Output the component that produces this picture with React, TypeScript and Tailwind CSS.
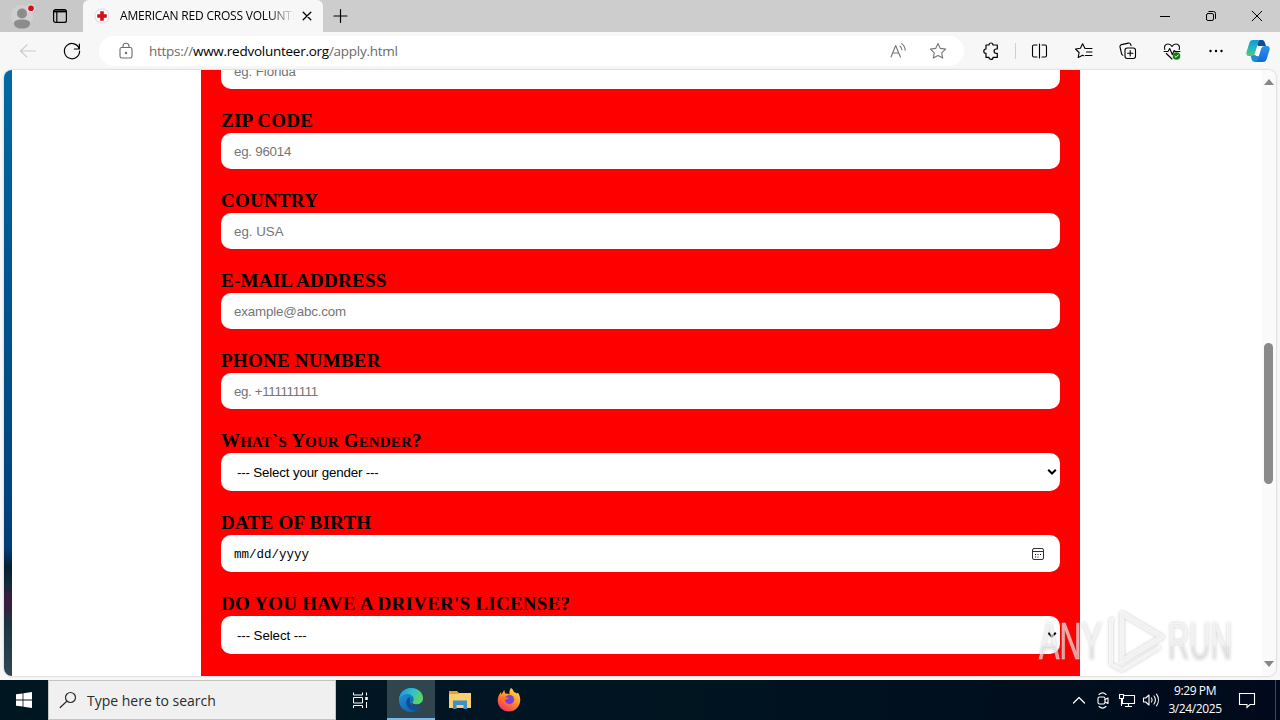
import type { ReactNode } from "react"
import clsx from "clsx"

function Icon({ size = 20, className, children }: { size?: number; className?: string; children: ReactNode }) {
  return (
    <svg
      width={size}
      height={size}
      viewBox={`0 0 ${size} ${size}`}
      fill="none"
      stroke="currentColor"
      strokeWidth={1.1}
      strokeLinecap="round"
      strokeLinejoin="round"
      className={clsx("shrink-0", className)}
    >
      {children}
    </svg>
  )
}

function TabBar() {
  return (
    <div className="flex h-8 shrink-0 bg-[#cdcdcd] text-black">
      <div className="flex w-[83px] items-center bg-[#c8c8c8] pl-[11px]">
        <Icon size={26}>
          <circle cx="11" cy="13" r="11" fill="#d0d0d0" stroke="none" />
          <circle cx="11" cy="10.5" r="5" fill="#8c8c8c" stroke="none" />
          <path d="M3 20.500c0-3 3-4 8-4s8 1 8 4c0 3-3 5-8 5s-8-2-8-5z" fill="#8c8c8c" stroke="none" />
          <circle cx="20" cy="5.200" r="4" fill="#d8d8d8" stroke="none" />
          <circle cx="20" cy="5.200" r="2.800" fill="#d80b18" stroke="none" />
        </Icon>
        <Icon className="ml-[13px]">
          <rect x="3.6" y="3.6" width="12.8" height="12.8" rx="2" strokeWidth="1.2" />
          <path d="M3.9 5.400h12.200" strokeWidth="2" strokeLinecap="butt" />
          <path d="M6.8 6v10" strokeWidth="1.2" />
        </Icon>
      </div>
      <div className="flex w-[240px] items-center rounded-t-md bg-[#f7f7f7] pl-[11px]">
        <Icon size={16}>
          <circle cx="8" cy="8" r="7" fill="#fff" stroke="#ddd" />
          <path d="M8 3.2v9.6M3.2 8h9.6" stroke="#d0101c" strokeWidth="3.6" strokeLinecap="butt" />
        </Icon>
        <div className="ml-[10px] w-[174px] overflow-hidden whitespace-nowrap font-['Open_Sans',sans-serif] text-xs tracking-[-0.2px] [mask-image:linear-gradient(to_right,black_86%,transparent)]">
          AMERICAN RED CROSS VOLUNTEER
        </div>
        <Icon size={16} className="ml-[5px]">
          <path d="M4.2 4.2l7.6 7.6M11.8 4.2l-7.6 7.6" strokeWidth="1.3" />
        </Icon>
      </div>
      <div className="flex flex-1 items-center pl-[10px]">
        <Icon size={16}>
          <path d="M7.500 1.500v13M1 8h13" strokeWidth="1.2" />
        </Icon>
      </div>
      <div className="flex w-[46px] items-center justify-center">
        <Icon size={12}>
          <path d="M1 6.5h10" strokeWidth="1" strokeLinecap="butt" />
        </Icon>
      </div>
      <div className="flex w-[46px] items-center justify-center">
        <Icon size={12}>
          <rect x="1.5" y="3.5" width="7" height="7" rx="1.5" strokeWidth="1" />
          <path d="M3.8 1.5h4.7a2 2 0 0 1 2 2v5" strokeWidth="1" />
        </Icon>
      </div>
      <div className="flex w-[46px] items-center justify-center">
        <Icon size={12}>
          <path d="M1.2 1.2l9.6 9.6M10.8 1.2l-9.6 9.6" strokeWidth="1" />
        </Icon>
      </div>
    </div>
  )
}

const toolCell = "flex w-11 shrink-0 items-center justify-center"

function Toolbar() {
  return (
    <div className="flex h-[38px] shrink-0 items-center bg-[#f7f7f7] text-black">
      <Icon className="ml-[18px] text-[#c9c9c9]">
        <path d="M2.5 10h15M9 3.8L2.5 10 9 16.2" />
      </Icon>
      <Icon className="ml-6">
        <path d="M17.3 8A7.6 7.6 0 1 0 17.6 10M17.4 3v5h-5" strokeWidth="1.2" />
      </Icon>
      <div className="ml-[17px] flex h-[30px] w-[865px] items-center rounded-full bg-white">
        <Icon className="ml-[17px] text-[#6b6b6b]">
          <rect x="4" y="6.500" width="12" height="10.500" rx="1.800" />
          <path d="M7 6.500V5.2a3 3 0 0 1 6 0v1.300" />
          <circle cx="10" cy="12" r=".6" fill="currentColor" />
        </Icon>
        <div className="ml-[13px] flex-1 whitespace-nowrap font-['Open_Sans',sans-serif] text-[13.5px] tracking-[-0.26px] text-[#6b6b6b]">
          https://<span className="text-black">www.redvolunteer.org</span>/apply.html
        </div>
        <Icon className="mr-[20px] text-[#767676]">
          <path d="M3 16L7.7 4.5 12.4 16M4.6 12h6.2" />
          <path d="M12 5.2a5 5 0 0 1 1.8 3.6M13.6 2.6a8.500 8.500 0 0 1 3.600 6.700" />
        </Icon>
        <Icon className="mr-[16px] text-[#767676]">
          <path d="M10 2.500l2.300 4.900 5.300.7-3.900 3.700 1 5.300-4.700-2.600-4.700 2.600 1-5.300-3.900-3.700 5.300-.7z" />
        </Icon>
      </div>
      <div className={clsx(toolCell, "ml-[5px]")}>
        <Icon>
          <path
            d="M5 4h3a2 2 0 0 1 4 0h4.300v4h-1a2.200 2.200 0 0 0 0 4.400h1v4H12a2 2 0 0 1-4 0H5v-4a2.200 2.200 0 0 1 0-4.400z"
            strokeWidth="1.200"
          />
        </Icon>
      </div>
      <div className="ml-[2px] h-4 w-px bg-[#d0d0d0]" />
      <div className={clsx(toolCell, "ml-[2px]")}>
        <Icon>
          <path d="M9.500 3v14M7 4H4a1.500 1.500 0 0 0-1.500 1.500v9A1.500 1.500 0 0 0 4 16h3M12 4h3A1.500 1.500 0 0 1 16.500 5.500v9a1.500 1.500 0 0 1-1.500 1.500h-3" />
        </Icon>
      </div>
      <div className={toolCell}>
        <Icon>
          <path d="M11.500 7.500H18M12.500 11H18M11.500 14.500H18" />
          <path d="M11 7.500L8.600 2.700 6.400 7.300l-4.900.7 3.600 3.500-.9 5 4.400-2.300 1.200.5" />
        </Icon>
      </div>
      <div className={toolCell}>
        <Icon>
          <rect x="7" y="7" width="10.500" height="10.500" rx="2.200" />
          <path d="M12.200 9.600v5.300M9.600 12.200h5.300" />
          <path d="M4.800 14.200a2 2 0 0 1-1.200-1.400L2 6a2 2 0 0 1 1.500-2.400l6.900-1.500a2 2 0 0 1 2.400 1.500l.2 1" />
        </Icon>
      </div>
      <div className={toolCell}>
        <Icon>
          <path d="M2.800 8.500C1.600 5.500 3.500 3 6 3c2 0 3.300 1.200 4 2.500C10.700 4.200 12 3 14 3c2.500 0 4.400 2.500 3.200 5.500" />
          <path d="M2 10.500h4l1.700-3 2.600 6 1.900-4 1 1H18M4.300 12.500L10 18" />
          <circle cx="14.500" cy="15" r="3.800" fill="#107c10" stroke="none" />
          <path d="M12.900 15.200l1.100 1.100 2.200-2.400" stroke="#fff" strokeWidth=".9" />
        </Icon>
      </div>
      <div className={toolCell}>
        <Icon>
          <g fill="currentColor" stroke="none">
            <circle cx="4.500" cy="10" r="1.200" />
            <circle cx="10" cy="10" r="1.200" />
            <circle cx="15.500" cy="10" r="1.200" />
          </g>
        </Icon>
      </div>
      <div className="flex flex-1 items-center justify-center pr-[3px]">
        <Icon size={24}>
          <defs>
            <linearGradient id="copilotLeft" x1="0" y1="0" x2="0" y2="1">
              <stop offset="0" stopColor="#1597dc" />
              <stop offset=".5" stopColor="#24b6c0" />
              <stop offset="1" stopColor="#57c878" />
            </linearGradient>
            <linearGradient id="copilotRight" x1="0" y1="0" x2="0" y2="1">
              <stop offset="0" stopColor="#2d93e8" />
              <stop offset="1" stopColor="#1268df" />
            </linearGradient>
          </defs>
          <g stroke="none">
            <path d="M9 1h7c2 0 2.500 1.500 3 3l1 3h-8z" fill="#114a9e" />
            <path d="M15 23H9c-2 0-3-1-3.500-3L4.600 16H12z" fill="#1c8fd8" />
            <path d="M7 1h7c-1.600 1.200-2 3-2.600 5L9 14c-.7 2.200-2 3-4 3H3c-2.500 0-3-2-2.500-4L3.500 3.500C4.200 1.800 5.300 1 7 1z" fill="url(#copilotLeft)" />
            <path d="M17 23h-7c1.600-1.200 2-3 2.600-5l2.400-8c.7-2.200 2-3 4-3h2c2.500 0 3 2 2.500 4l-3 9.500c-.7 1.700-1.800 2.500-3.500 2.500z" fill="url(#copilotRight)" />
            <path d="M13.500 7h2.300l-3.400 10h-3z" fill="#fff" />
          </g>
        </Icon>
      </div>
    </div>
  )
}

function Field({ label, boxClass, children }: { label: ReactNode; boxClass: string; children: ReactNode }) {
  return (
    <div className="flex shrink-0 flex-col">
      <div className="h-6 whitespace-nowrap font-['Liberation_Serif',serif] text-[19px] font-bold leading-6 tracking-[0.25px] text-black">
        {label}
      </div>
      <div className={clsx("flex items-center rounded-[10px] bg-white font-['Liberation_Sans',sans-serif] text-[13.33px]", boxClass)}>
        {children}
      </div>
    </div>
  )
}

// capitals with slightly smaller capitals after the first letter of each word
function SmallCaps({ text }: { text: string }) {
  return text.split(/([a-z]+)/).map((part, i) => (
    <span key={i} className={clsx("tracking-[0.15px]", i % 2 === 1 && "text-[15px] uppercase")}>
      {part}
    </span>
  ))
}

function SelectArrow() {
  return (
    <Icon size={10} className="ml-auto mr-[3px]">
      <path d="M1.200 2.700L5 6.500l3.800-3.800" stroke="#000" strokeWidth="2" strokeLinecap="butt" strokeLinejoin="miter" />
    </Icon>
  )
}

const textBox = "h-9 px-[13px] pt-px text-[#757575]"
const selectBox = "h-[38px] pl-4 text-black"

function ApplyForm() {
  return (
    <div className="flex w-[879px] shrink-0 flex-col gap-5 overflow-hidden bg-[#ff0000] px-5">
      <div className="-mt-[17px] flex h-9 shrink-0 items-center rounded-[10px] bg-white px-[13px] pt-px font-['Liberation_Sans',sans-serif] text-[13.33px] tracking-[-0.1px] text-[#757575]">
        eg. Florida
      </div>
      <Field label="ZIP CODE" boxClass={textBox}>
        <span className="tracking-[-0.25px]">eg. 96014</span>
      </Field>
      <Field label="COUNTRY" boxClass={textBox}>
        <span>eg. USA</span>
      </Field>
      <Field label="E-MAIL ADDRESS" boxClass={textBox}>
        <span className="tracking-[-0.15px]">example@abc.com</span>
      </Field>
      <Field label="PHONE NUMBER" boxClass={textBox}>
        <span className="tracking-[-0.35px]">eg. +111111111</span>
      </Field>
      <Field label={<SmallCaps text="What`s Your Gender?" />} boxClass={selectBox}>
        <span className="pt-0.5 tracking-[-0.17px]">--- Select your gender ---</span>
        <SelectArrow />
      </Field>
      <Field label="DATE OF BIRTH" boxClass="h-[37px] pl-[13px] text-black">
        <span className="pt-[3px] font-['Liberation_Mono',monospace] text-[12.5px]">mm/dd/yyyy</span>
        <Icon size={14} className="ml-auto mr-[15px]">
          <rect x="1.500" y="1.500" width="11" height="11" rx="1.500" strokeWidth="1" stroke="#333" />
          <path d="M1.500 4.500h11" strokeWidth="1" stroke="#333" />
          <path d="M4 7.500h1M6.500 7.500h1M9 7.500h1M4 10h1M6.500 10h1" strokeWidth="1" strokeLinecap="butt" />
        </Icon>
      </Field>
      <Field label="DO YOU HAVE A DRIVER'S LICENSE?" boxClass={selectBox}>
        <span className="pt-0.5 tracking-[-0.1px]">--- Select ---</span>
        <SelectArrow />
      </Field>
    </div>
  )
}

function Scrollbar() {
  return (
    <div className="flex w-[14px] flex-col items-center bg-[#fafafa] pr-px">
      <svg width="10" height="6" viewBox="0 0 10 6" className="mt-[9px] shrink-0">
        <path d="M5 0l5 6H0z" fill="#868686" />
      </svg>
      <div className="mt-[258px] h-[141px] w-[9px] rounded-full bg-[#8a8a8a]" />
      <svg width="10" height="6" viewBox="0 0 10 6" className="mb-[9px] mt-auto shrink-0">
        <path d="M5 6L0 0h10z" fill="#868686" />
      </svg>
    </div>
  )
}

function Watermark() {
  return (
    <svg
      width="210"
      height="72"
      viewBox="0 0 210 72"
      className="absolute left-[1034px] top-[605px] drop-shadow-[0_0_1.5px_rgba(100,100,100,0.5)]"
      fontFamily="'Liberation Sans Narrow', 'Liberation Sans', sans-serif"
      fontSize="51"
    >
      <defs>
        <linearGradient id="markFade" x1="0" y1="0" x2="0" y2="1">
          <stop offset="0" stopColor="#ffffff" stopOpacity=".6" />
          <stop offset=".55" stopColor="#ffffff" stopOpacity=".6" />
          <stop offset=".6" stopColor="#e6e6e6" stopOpacity=".65" />
          <stop offset="1" stopColor="#e6e6e6" stopOpacity=".65" />
        </linearGradient>
      </defs>
      <g fill="url(#markFade)" stroke="#ffffff" strokeOpacity=".35" strokeWidth="1.200">
        <text x="5" y="54" textLength="63" lengthAdjust="spacingAndGlyphs">ANY</text>
        <text x="134" y="54" textLength="64" lengthAdjust="spacingAndGlyphs">RUN</text>
      </g>
      <g fill="none" stroke="#ffffff" strokeOpacity=".75" strokeLinejoin="round">
        <path d="M88 8.500L128 32 88 56z" strokeWidth="5" />
        <path d="M80 15h-3v44l11 6 38-23" strokeWidth="4" />
      </g>
    </svg>
  )
}

function Taskbar() {
  return (
    <div className="flex h-10 shrink-0 bg-gradient-to-r from-[#001722] via-[#001521] to-[#000a1c] text-white">
      <div className="flex w-12 items-center justify-center">
        <Icon size={16}>
          <path d="M0 2.300l6.600-.9v6.200H0zM7.400 1.300L16 0v7.600H7.400zM0 8.400h6.600v6.200L0 13.700zM7.400 8.400H16V16l-8.600-1.300z" fill="#fff" stroke="none" />
        </Icon>
      </div>
      <div className="flex w-72 items-center border border-[#c4c4c4] bg-[#f0f0f0] pl-[10px] text-[#2b2b2b]">
        <Icon size={18}>
          <circle cx="11.500" cy="6.500" r="5" strokeWidth="1.200" />
          <path d="M7.800 10.200L1.200 16.500" strokeWidth="1.200" />
        </Icon>
        <span className="ml-[10px] whitespace-nowrap font-['Open_Sans',sans-serif] text-[14px]">Type here to search</span>
      </div>
      <div className="flex w-[51px] items-center justify-center pr-1">
        <Icon size={18}>
          <g strokeLinecap="butt" strokeWidth="1">
            <path d="M2.500 1.500v2.500h9V1.500M2.500 17v-2.500h9V17M2.500 6.500h9v5.500h-9z" />
            <path d="M15.500 1.500v3M15.500 11v6" />
            <path d="M15.500 6v3" strokeWidth="2.500" />
          </g>
        </Icon>
      </div>
      <div className="flex w-12 items-center justify-center border-b-2 border-[#76b9ed] bg-[#31454f] pt-0.5">
        <Icon size={24}>
          <defs>
            <linearGradient id="edgeTop" x1="0" y1="0" x2="1" y2=".4">
              <stop offset="0" stopColor="#1c8fd8" />
              <stop offset=".55" stopColor="#2fbfd0" />
              <stop offset="1" stopColor="#5fd45f" />
            </linearGradient>
            <linearGradient id="edgeBottom" x1="0" y1="0" x2="1" y2="1">
              <stop offset="0" stopColor="#1b9de2" />
              <stop offset="1" stopColor="#0c4f9c" />
            </linearGradient>
          </defs>
          <g stroke="none">
            <circle cx="12" cy="12" r="12" fill="url(#edgeBottom)" />
            <path d="M0 11.500C.5 5 5.500 0 12 0c7 0 12 4.800 12 10 0 4-3 6.500-6.500 6.500-3 0-4-1-4-2 0-.8 1.200-1.300 1.200-3.300C14.700 8 11.500 6 8 6 4 6 .8 8.500 0 11.500z" fill="url(#edgeTop)" />
            <path d="M10 9.500c-3 2-3.500 6-1.500 9 2 3 5.500 4.500 9 3.500 2-.7 3.800-2 5-4-3 1.500-7 1.200-9.500-.8-2.200-1.800-3-4.500-1.500-6.700z" fill="#124b90" />
            <path d="M13.500 14.500c0 1 1 2 4 2 2 0 4-.8 5.200-2.200l2 1-1 2.200c-3 2-7.500 1.800-10 0-1.300-1-1-2.500-.2-3z" fill="#31454f" />
          </g>
        </Icon>
      </div>
      <div className="flex w-[50px] items-center justify-center">
        <Icon size={22}>
          <g stroke="none">
            <path d="M0 2h8l2 2h11c.6 0 1 .4 1 1v14H0z" fill="#e9a320" />
            <path d="M0 5h9l2-1h11v15H0z" fill="#f8d070" />
            <path d="M4 11.500h14V20h-3.500v-4h-7v4H4z" fill="#3c8fc8" />
          </g>
        </Icon>
      </div>
      <div className="flex w-12 items-center justify-center">
        <Icon size={24}>
          <defs>
            <linearGradient id="foxFire" x1=".8" y1="0" x2=".2" y2="1">
              <stop offset="0" stopColor="#ffe14a" />
              <stop offset=".5" stopColor="#ff8a24" />
              <stop offset="1" stopColor="#f0286a" />
            </linearGradient>
          </defs>
          <g stroke="none">
            <path d="M14 0c1.500 1 2.500 2.500 3 4.300 1-.2 1.800.3 2.500 1.200L21 4.800c1.500 2 2.500 5 2.200 8C22.700 19 18 23.500 12 23.500S.7 19 .7 12.500c0-3.500 1.500-6.500 3.300-8.500l.5 2.500L7.200 2l1 3.500c1.500-.3 3 0 4.300.8-.3-2.500.2-4.800 1.500-6.300z" fill="url(#foxFire)" />
            <circle cx="12.500" cy="11.500" r="4.600" fill="#7b3fdd" />
            <path d="M5 9c2.500-.8 5 .2 7 1.500-1.500.5-3 .6-4 2-.7 1.300-.2 3 1.300 4C6.500 16 4.300 12.500 5 9z" fill="#ff6d2d" />
          </g>
        </Icon>
      </div>
      <div className="ml-auto flex items-center">
        <Icon className="mr-1">
          <path d="M4.500 13l5.500-5.500 5.500 5.500" strokeWidth="1.200" />
        </Icon>
        <Icon className="mr-1">
          <rect x="5" y="7" width="7" height="7" rx="1.500" />
          <path d="M12 9.500l3-1.500v5.500l-3-1.500M6 4.500c2-1.800 5-1.800 7 0M6 16.500c2 1.800 5 1.800 7 0" />
        </Icon>
        <Icon className="mr-1">
          <path d="M7 5.500h10.500v8H5.500V9M11.500 13.500V16M8 16.500h7" strokeLinecap="butt" />
          <path d="M2.500 4.500h4v4h-4zM4.500 8.500V16" strokeLinecap="butt" />
        </Icon>
        <Icon>
          <path d="M2.500 8h2.200L8 5v10l-3.300-3H2.500zM10.500 8c.8 1.200.8 2.800 0 4M13 6c1.700 2.400 1.700 5.600 0 8M15.500 4.200c2.500 3.400 2.500 8.200 0 11.600" />
        </Icon>
        <div className="flex w-[68px] flex-col items-center whitespace-nowrap font-['Open_Sans',sans-serif] text-[12px] leading-[18px] tracking-[-0.4px]">
          <span>9:29 PM</span>
          <span>3/24/2025</span>
        </div>
        <Icon className="ml-2">
          <path d="M2.500 3.500h15v11H13l-3 3v-3H2.500z" strokeLinejoin="miter" />
        </Icon>
        <div className="ml-[18px] mr-1 h-10 w-px bg-[#3d4a58]" />
      </div>
    </div>
  )
}

export default function App() {
  return (
    <div className="relative flex h-[720px] w-[1280px] flex-col overflow-hidden bg-[#f7f7f7]">
      <TabBar />
      <Toolbar />
      <div className="mx-1 mb-1 flex h-[606px] shrink-0 overflow-hidden rounded-lg bg-white shadow-[0_0_2px_rgba(0,0,0,0.3)]">
        <div className="w-2 shrink-0 bg-[linear-gradient(to_bottom,#006aa6_0%,#00558f_35%,#004482_70%,#003c74_79%,#061f33_82%,#122a3c_85%,#3b1c3c_87%,#33203f_89%,#1c3345_91%,#2f4656_100%)]" />
        <div className="w-[189px] shrink-0" />
        <ApplyForm />
        <div className="flex-1" />
        <Scrollbar />
      </div>
      <Taskbar />
      <Watermark />
    </div>
  )
}
